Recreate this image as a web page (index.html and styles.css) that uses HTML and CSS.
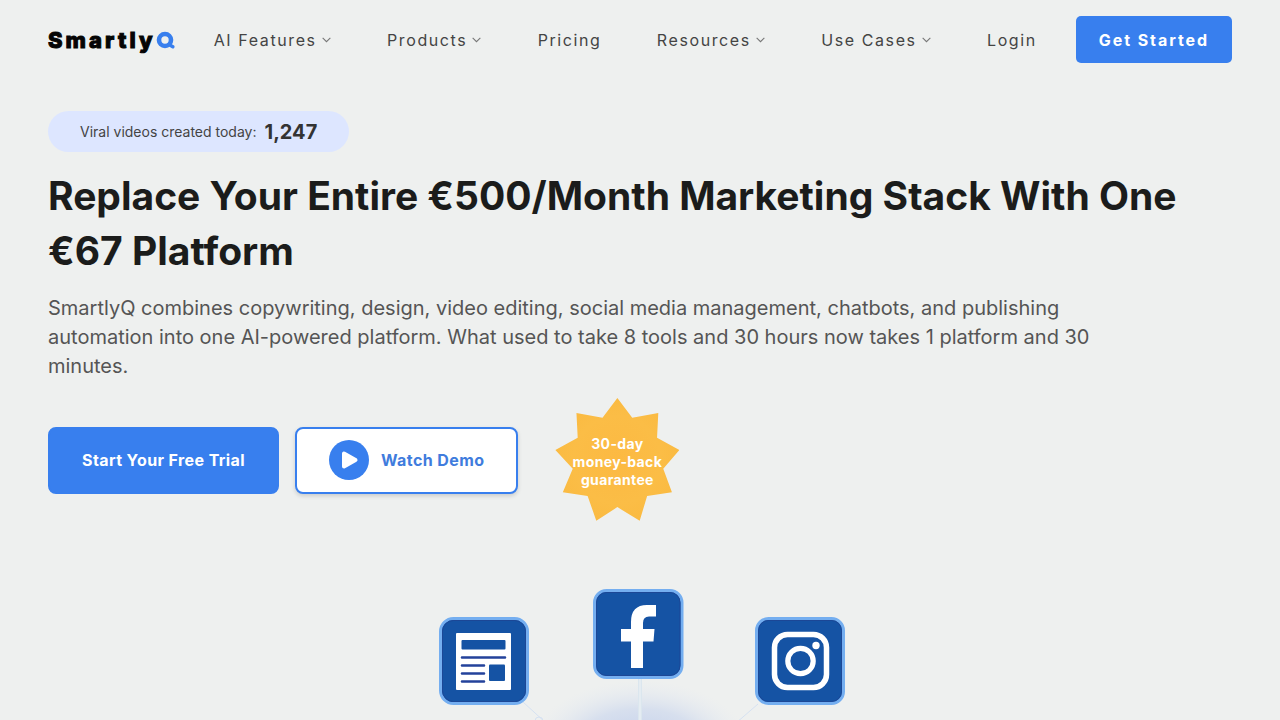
FILE: index.html
```html
<!DOCTYPE html>
<html lang="en">
<head>
    <meta charset="UTF-8">
    <meta name="viewport" content="width=device-width, initial-scale=1.0">
    <title>SmartlyQ</title>
    <link rel="stylesheet" href="styles.css">
</head>
<body>

    <!-- Header -->
    <header class="header">
        <a class="logo" href="#" aria-label="SmartlyQ">
            <span class="logo-name">Smartly</span>
            <svg class="logo-mark" viewBox="0 0 19 18" aria-hidden="true">
                <circle cx="9" cy="9" r="6" fill="none" stroke="#387fee" stroke-width="4.6"/>
                <path d="M13 13.5 L16.8 15.8" stroke="#387fee" stroke-width="3.4" stroke-linecap="round"/>
            </svg>
        </a>
        <nav class="nav">
            <a class="nav-link" href="#">AI Features
                <svg class="chevron" viewBox="0 0 10 10"><path d="M1.5 3.5 L5 7 L8.5 3.5"/></svg>
            </a>
            <a class="nav-link" href="#">Products
                <svg class="chevron" viewBox="0 0 10 10"><path d="M1.5 3.5 L5 7 L8.5 3.5"/></svg>
            </a>
            <a class="nav-link" href="#">Pricing</a>
            <a class="nav-link" href="#">Resources
                <svg class="chevron" viewBox="0 0 10 10"><path d="M1.5 3.5 L5 7 L8.5 3.5"/></svg>
            </a>
            <a class="nav-link" href="#">Use Cases
                <svg class="chevron" viewBox="0 0 10 10"><path d="M1.5 3.5 L5 7 L8.5 3.5"/></svg>
            </a>
            <a class="nav-link" href="#">Login</a>
        </nav>
        <button class="get-started">Get Started</button>
    </header>

    <!-- Hero -->
    <main class="hero">
        <div class="counter">Viral videos created today: <strong>1,247</strong></div>
        <h1>Replace Your Entire €500/Month Marketing Stack With One €67 Platform</h1>
        <p class="intro">SmartlyQ combines copywriting, design, video editing, social media management, chatbots, and publishing automation into one AI-powered platform. What used to take 8 tools and 30 hours now takes 1 platform and 30 minutes.</p>

        <div class="actions">
            <button class="btn btn-primary">Start Your Free Trial</button>
            <button class="btn btn-demo">
                <svg class="play" viewBox="0 0 40 40" aria-hidden="true">
                    <circle cx="20" cy="20" r="20" fill="#387fee"/>
                    <path d="M15 13.5 V26.5 L26.5 20 Z" fill="#fff" stroke="#fff" stroke-width="4" stroke-linejoin="round"/>
                </svg>
                Watch Demo
            </button>
            <div class="guarantee">30-day<br>money-back<br>guarantee</div>
        </div>

        <!-- Channels diagram -->
        <svg class="channels" viewBox="0 0 480 140" aria-hidden="true">
            <defs>
                <radialGradient id="glow">
                    <stop offset="0" stop-color="#a4b8e8" stop-opacity="0.7"/>
                    <stop offset="0.6" stop-color="#b4c6ec" stop-opacity="0.4"/>
                    <stop offset="1" stop-color="#dde5f5" stop-opacity="0"/>
                </radialGradient>
            </defs>
            <ellipse cx="240" cy="172" rx="112" ry="72" fill="url(#glow)"/>
            <path d="M240 98 V140" stroke="#dbe6ee" stroke-width="4"/>
            <path d="M240 98 V140" stroke="#eef2f5" stroke-width="1"/>
            <path d="M123 122 L146 143 M358 124 L336 143" stroke="#d5e1f1" stroke-width="1"/>
            <circle cx="139" cy="141" r="4" fill="none" stroke="#d5e1f1"/>

            <!-- news -->
            <rect x="40.5" y="38.5" width="87" height="85" rx="13" fill="#1553a4" stroke="#74aef0" stroke-width="3"/>
            <rect x="42.5" y="40.5" width="83" height="81" rx="11" fill="none" stroke="#1c4796"/>
            <rect x="56" y="53" width="55" height="57" rx="1" fill="#fff"/>
            <rect x="61.5" y="60" width="44" height="9.5" rx="1" fill="#1553a4"/>
            <path d="M62 77.5 H105 M62 85.5 H84 M62 93.5 H84 M62 101.5 H84" stroke="#23429b" stroke-width="2.6" stroke-linecap="round"/>
            <rect x="89" y="84.5" width="16" height="16.5" rx="1" fill="#1553a4"/>

            <!-- facebook -->
            <rect x="194.5" y="10.5" width="87.5" height="87" rx="12" fill="#1553a4" stroke="#74aef0" stroke-width="3"/>
            <rect x="196.5" y="12.5" width="83.5" height="83" rx="10" fill="none" stroke="#1c4796"/>
            <path d="M231 88 V61.5 H221 V49 H231 V42 Q231 25 247 25 H256 V36.5 H249 Q243 36.5 243 43 V49 H254.5 L253.5 61.5 H243 V88 Z" fill="#fff"/>

            <!-- instagram -->
            <rect x="356.5" y="38.5" width="87" height="85" rx="12" fill="#1553a4" stroke="#74aef0" stroke-width="3"/>
            <rect x="358.5" y="40.5" width="83" height="81" rx="10" fill="none" stroke="#1c4796"/>
            <rect x="374.5" y="54.5" width="52" height="53" rx="13" fill="none" stroke="#fff" stroke-width="5.5"/>
            <circle cx="400.5" cy="81" r="12.7" fill="none" stroke="#fff" stroke-width="5.2"/>
            <circle cx="416" cy="65.5" r="3.7" fill="#fff"/>
        </svg>
    </main>

</body>
</html>
```
FILE: styles.css
```css
* {
    box-sizing: border-box;
}
body {
    margin: 0;
    background-color: #eef0ef;
    color: #444;
    font-family: Inter, sans-serif;
}
a {
    color: inherit;
    text-decoration: none;
}
button {
    font-family: inherit;
    font-size: 16px;
    cursor: pointer;
}

/* Header */
.header {
    display: flex;
    align-items: center;
    gap: 39px;
    padding: 16px 48px;
}
.logo {
    display: flex;
    align-items: center;
    color: #050505;
}
.logo-name {
    font-size: 22px;
    font-weight: 800;
    letter-spacing: 0.14em;
    line-height: 28px;
    -webkit-text-stroke: 1px #050505;
}
.logo-mark {
    width: 19px;
    height: 18px;
}
.nav {
    display: flex;
    flex: 1;
    justify-content: space-between;
}
.nav-link {
    display: flex;
    align-items: center;
    gap: 4px;
    font-size: 16px;
    letter-spacing: 0.1em;
    white-space: nowrap;
}
.chevron {
    width: 11px;
    height: 11px;
    fill: none;
    stroke: #777;
}
.get-started {
    height: 47px;
    padding: 0 23px;
    background-color: #387fee;
    color: white;
    border: none;
    border-radius: 5px;
    font-weight: 700;
    letter-spacing: 0.12em;
}

/* Hero */
.hero {
    padding: 32px 48px 0;
}
.counter {
    display: flex;
    align-items: center;
    gap: 8px;
    width: fit-content;
    height: 41px;
    padding: 0 32px;
    background-color: #dde6ff;
    border-radius: 21px;
    font-size: 14px;
}
.counter strong {
    color: #333;
    font-size: 20px;
}
h1 {
    margin: 16px 0;
    color: #1b1c1b;
    font-size: 39px;
    font-weight: 700;
    line-height: 55px;
}
.intro {
    max-width: 1120px;
    margin: 0;
    color: #555;
    font-size: 20px;
    line-height: 29px;
}

/* Buttons */
.actions {
    display: flex;
    align-items: center;
    margin-top: 17px;
}
.btn {
    display: flex;
    align-items: center;
    gap: 12px;
    height: 67px;
    padding: 0 32px;
    border: 2px solid #387fee;
    border-radius: 8px;
    font-weight: 700;
    letter-spacing: 0.025em;
}
.btn-primary {
    background-color: #387fee;
    color: white;
}
.btn-demo {
    margin-left: 16px;
    background-color: white;
    color: #407cdd;
    box-shadow: 0 2px 4px rgba(0, 0, 0, 0.15);
}
.play {
    width: 40px;
    height: 40px;
}
.guarantee {
    display: flex;
    align-items: center;
    justify-content: center;
    width: 124px;
    height: 124px;
    margin-left: 37px;
    padding-top: 4px;
    background: radial-gradient(#fcb942, #fbbd46 50%, #f9b73c);
    clip-path: polygon(50% 0, 62% 16%, 83% 12%, 82% 32%, 100% 42%, 87% 57%, 94% 76%, 74% 79%, 68% 99%, 50% 88%, 33% 99%, 26% 79%, 6% 76%, 14% 57%, 0 42%, 18% 32%, 17% 12%, 38% 16%);
    color: white;
    font-size: 14px;
    font-weight: 700;
    letter-spacing: 0.025em;
    line-height: 18px;
    text-align: center;
}

/* Channels diagram */
.channels {
    display: block;
    width: 100%;
    max-width: 480px;
    margin: 58px auto 0;
}
```
